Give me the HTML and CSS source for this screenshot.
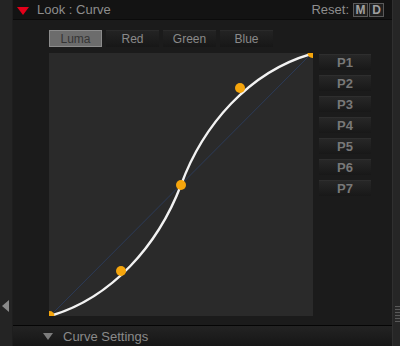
FILE: index.html
```html
<!DOCTYPE html>
<html>
<head>
<meta charset="utf-8">
<link rel="stylesheet" href="styles.css">
</head>
<body>
<div class="app">
  <div class="left-strip">
    <span class="left-arrow"></span>
  </div>
  <div class="main">
    <div class="header">
      <span class="red-tri"></span>
      <span class="title">Look : Curve</span>
      <span class="reset">Reset:</span>
      <span class="rbtn">M</span>
      <span class="rbtn">D</span>
    </div>
    <div class="content">
      <div class="tabs">
        <div class="tab active">Luma</div>
        <div class="tab">Red</div>
        <div class="tab">Green</div>
        <div class="tab">Blue</div>
      </div>
      <div class="body">
        <div class="graph">
          <svg width="264" height="263" viewBox="49 53 264 263">
            <rect x="49" y="53" width="264" height="263" fill="#2a2a2a"/>
            <line x1="50" y1="316" x2="312" y2="53" stroke="#2c3b58" stroke-width="1"/>
            <path d="M50,316 C112,298 158,245 181,185 C203,125 249,72 311,54" fill="none" stroke="#f2f2f2" stroke-width="2.4"/>
            <circle cx="49.5" cy="316" r="5" fill="#f5a50c"/>
            <circle cx="312.5" cy="53" r="5" fill="#f5a50c"/>
            <circle cx="121" cy="271" r="5" fill="#f5a50c"/>
            <circle cx="181" cy="185" r="5" fill="#f5a50c"/>
            <circle cx="240" cy="88" r="5" fill="#f5a50c"/>
          </svg>
        </div>
        <div class="presets">
          <div class="pbtn">P1</div>
          <div class="pbtn">P2</div>
          <div class="pbtn">P3</div>
          <div class="pbtn">P4</div>
          <div class="pbtn">P5</div>
          <div class="pbtn">P6</div>
          <div class="pbtn">P7</div>
        </div>
      </div>
    </div>
    <div class="footer">
      <span class="down-tri"></span>
      <span class="footer-label">Curve Settings</span>
    </div>
  </div>
  <div class="right-strip">
    <div class="grip"></div>
  </div>
</div>
</body>
</html>
```
FILE: styles.css
```css
* { box-sizing: border-box; }
html, body {
  margin: 0;
  padding: 0;
  width: 400px;
  height: 346px;
  overflow: hidden;
  background: #1b1b1b;
  font-family: "Liberation Sans", Arial, sans-serif;
}
.app {
  display: flex;
  width: 400px;
  height: 346px;
}
.left-strip {
  width: 13px;
  background: #242424;
  border-right: 1px solid #1e1e1e;
  display: flex;
  flex-direction: column;
  justify-content: flex-end;
  padding-bottom: 34px;
  padding-left: 2px;
}
.left-arrow {
  width: 0;
  height: 0;
  border-top: 6px solid transparent;
  border-bottom: 6px solid transparent;
  border-right: 7px solid #8a8a8a;
}
.main {
  width: 379px;
  display: flex;
  flex-direction: column;
}
.header {
  height: 20px;
  background: #131313;
  border-bottom: 1px solid #0b0b0b;
  display: flex;
  align-items: center;
  padding-left: 4px;
  padding-right: 8px;
}
.red-tri {
  width: 0;
  height: 0;
  border-left: 6px solid transparent;
  border-right: 6px solid transparent;
  border-top: 8px solid #e4001a;
  margin-right: 8px;
  margin-top: 2px;
}
.title {
  color: #8e8e8e;
  font-size: 13px;
  flex: 1;
}
.reset {
  color: #8e8e8e;
  font-size: 13px;
  margin-right: 3px;
}
.rbtn {
  width: 15px;
  height: 14px;
  border: 1px solid #5a5a5a;
  background: #202020;
  color: #a0a0a0;
  font-size: 12px;
  font-weight: bold;
  display: flex;
  align-items: center;
  justify-content: center;
  margin-left: 1px;
}
.content {
  flex: 1;
  padding: 10px 0 0 36px;
}
.tabs {
  display: flex;
  gap: 4px;
  height: 17px;
}
.tab {
  width: 53px;
  height: 17px;
  background: linear-gradient(#232323, #171717);
  border-top: 1px solid #2a2a2a;
  color: #8a8a8a;
  font-size: 12px;
  display: flex;
  align-items: center;
  justify-content: center;
}
.tab.active {
  background: #6c6c6c;
  border: 1px solid #8c8c8c;
  color: #353535;
}
.body {
  display: flex;
  margin-top: 6px;
}
.graph {
  width: 264px;
  height: 263px;
}
.graph svg { display: block; }
.presets {
  margin-left: 6px;
  margin-top: 1px;
  display: flex;
  flex-direction: column;
  gap: 5px;
}
.pbtn {
  width: 52px;
  height: 16px;
  background: linear-gradient(#272727, #181818);
  border-top: 1px solid #2e2e2e;
  color: #787878;
  font-size: 13px;
  font-weight: bold;
  display: flex;
  align-items: center;
  justify-content: center;
}
.footer {
  height: 21px;
  border-top: 1px solid #050505;
  background: linear-gradient(#232323, #161616);
  display: flex;
  align-items: center;
  padding-left: 30px;
}
.down-tri {
  width: 0;
  height: 0;
  border-left: 5px solid transparent;
  border-right: 5px solid transparent;
  border-top: 7px solid #7c7c7c;
  margin-right: 10px;
}
.footer-label {
  color: #8a8a8a;
  font-size: 13px;
}
.right-strip {
  width: 8px;
  background: #262626;
  border-left: 1px solid #303030;
  display: flex;
  flex-direction: column;
  justify-content: flex-end;
  padding-bottom: 24px;
}
.grip {
  height: 16px;
  margin-left: 2px;
  background: repeating-linear-gradient(#5a5a5a 0 1px, #2a2a2a 1px 3px);
}
```
